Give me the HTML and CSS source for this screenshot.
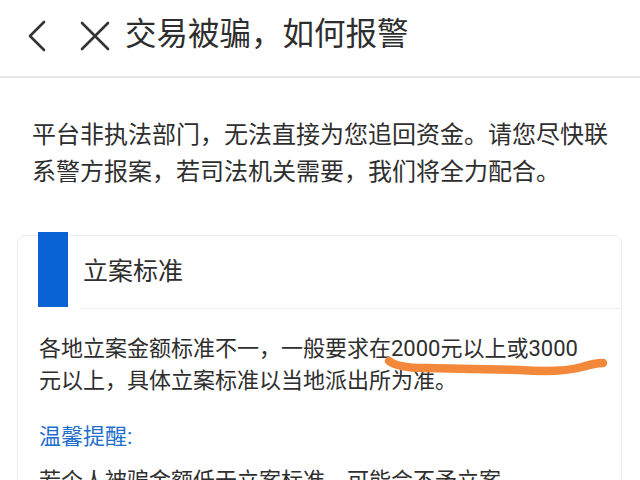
FILE: index.html
```
<!DOCTYPE html>
<html lang="zh-CN">
<head>
<meta charset="utf-8">
<link rel="stylesheet" href="styles.css">
</head>
<body>
<header class="topbar">
  <svg class="icon-back" width="20" height="32" viewBox="0 0 20 32"><path d="M17 2 L3 16 L17 30" fill="none" stroke="#333" stroke-width="2.6" stroke-linecap="round" stroke-linejoin="round"/></svg>
  <svg class="icon-close" width="32" height="32" viewBox="0 0 32 32"><path d="M3 3 L29 29 M29 3 L3 29" fill="none" stroke="#333" stroke-width="2.6" stroke-linecap="round"/></svg>
  <h1 class="title">交易被骗，如何报警</h1>
</header>
<p class="intro">平台非执法部门，无法直接为您追回资金。请您尽快联系警方报案，若司法机关需要，我们将全力配合。</p>
<section class="card">
  <div class="card-head">
    <span class="card-bar"></span>
    <div class="card-title-wrap"><h2 class="card-title">立案标准</h2></div>
  </div>
  <div class="card-body">
    <p class="text">各地立案金额标准不一，一般要求在2000元以上或3000元以上，具体立案标准以当地派出所为准。</p>
    <p class="tip">温馨提醒:</p>
    <p class="text">若个人被骗金额低于立案标准，可能会不予立案。</p>
  </div>
</section>
<svg class="scribble" width="640" height="480" viewBox="0 0 640 480"><path d="M389 361 Q398 368 425 368 L520 370 Q560 373 582 367 Q595 363 603 363" fill="none" stroke="#f3883a" stroke-width="8.5" stroke-linecap="round" stroke-linejoin="round"/></svg>
</body>
</html>
```
FILE: styles.css
```
html, body {
  margin: 0;
  padding: 0;
  background: #fff;
}
body {
  width: 640px;
  height: 480px;
  overflow: hidden;
  position: relative;
  font-family: "Roboto", "Noto Sans CJK SC", sans-serif;
  color: #2e2e2e;
}
.topbar {
  display: flex;
  align-items: center;
  padding-left: 27px;
  border-bottom: 2px solid #e6e6e6;
  box-sizing: border-box;
  height: 78px;
}
.icon-back {
  display: block;
  margin-top: -4px;
}
.icon-close {
  display: block;
  margin-left: 32px;
  margin-top: -4px;
}
.title {
  margin: -7px 0 0 14px;
  font-size: 31.5px;
  font-weight: 400;
  line-height: 40px;
  color: #2e2e2e;
}
.intro {
  margin: 39px 0 0 0;
  padding: 0 28px 0 32px;
  font-size: 24px;
  line-height: 37px;
}
.card {
  margin: 44px 18px 0 17px;
  border: 1px solid #ececec;
  border-radius: 8px;
  height: 400px;
}
.card-head {
  display: flex;
  height: 73px;
}
.card-bar {
  display: block;
  width: 30px;
  height: 75px;
  margin-left: 20px;
  margin-top: -4px;
  background: #0a62d4;
  flex: none;
}
.card-title-wrap {
  flex: 1;
  margin-left: 12px;
  border-bottom: 1px solid #efefef;
  display: flex;
  align-items: center;
}
.card-title {
  margin: 0 0 0 3px;
  font-size: 25px;
  font-weight: 400;
  line-height: 34px;
  color: #2e2e2e;
}
.card-body {
  padding: 24px 26px 0 21px;
}
.text {
  margin: 0;
  font-size: 22px;
  line-height: 32px;
}
.tip {
  margin: 24px 0 12px 0;
  font-size: 22px;
  line-height: 32px;
  color: #1e6ecb;
}
.scribble {
  position: absolute;
  left: 0;
  top: 0;
  pointer-events: none;
}
```
